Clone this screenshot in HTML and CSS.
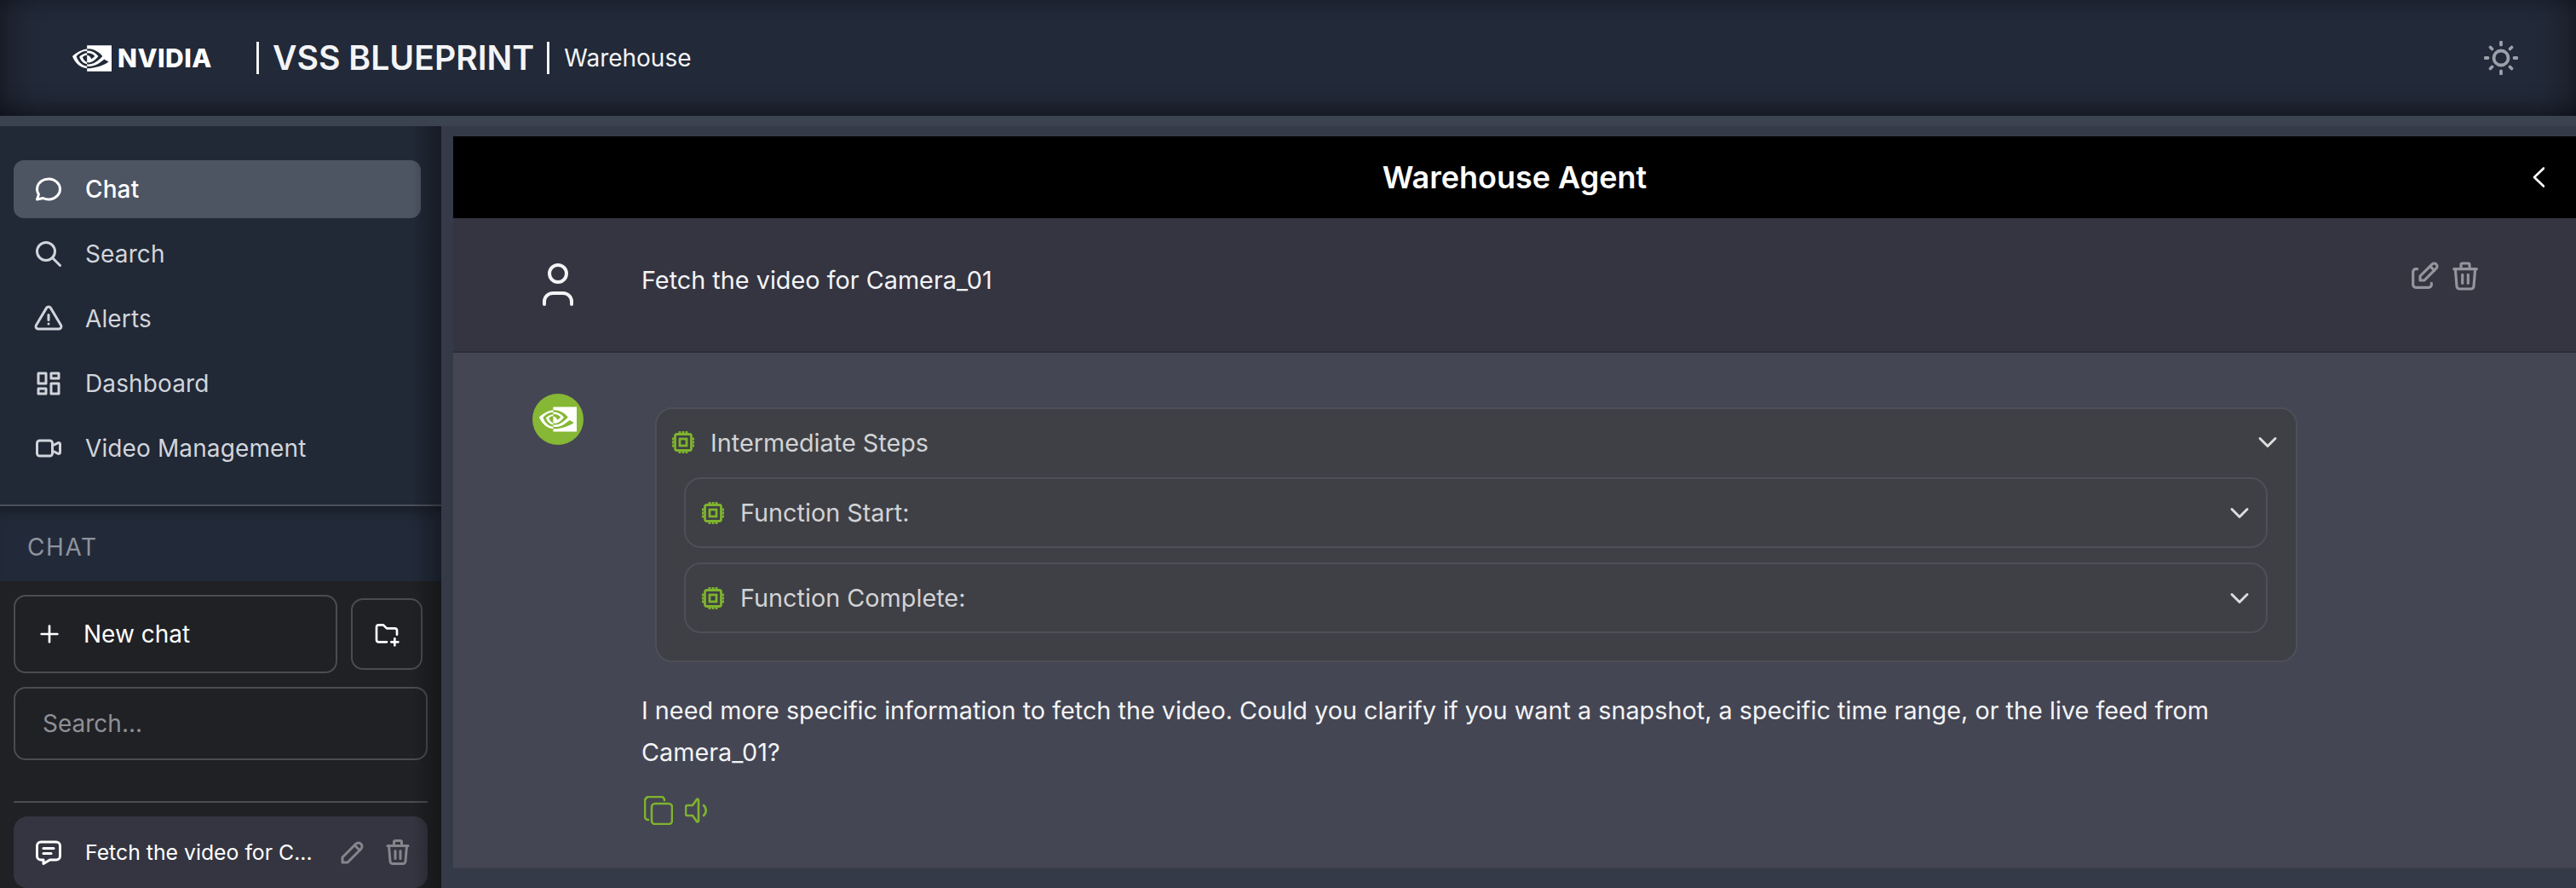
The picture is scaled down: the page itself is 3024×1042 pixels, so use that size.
FILE: index.html
```html
<!DOCTYPE html>
<html lang="en">
<head>
<meta charset="utf-8">
<title>VSS Blueprint - Warehouse</title>
<link rel="stylesheet" href="styles.css">
</head>
<body>
<svg class="sprite" aria-hidden="true">
  <symbol id="nv" viewBox="0 4 24 16"><path d="M8.948 8.798v-1.43a6.7 6.7 0 0 1 .424-.018c3.922-.124 6.493 3.374 6.493 3.374s-2.774 3.851-5.75 3.851c-.398 0-.787-.062-1.158-.185v-4.346c1.528.185 1.837.857 2.747 2.385l2.04-1.714s-1.492-1.952-4-1.952a6.016 6.016 0 0 0-.796.035m0-4.735v2.138l.424-.027c5.45-.185 9.01 4.47 9.01 4.47s-4.08 4.964-8.33 4.964c-.37 0-.733-.035-1.095-.097v1.325c.3.035.61.062.91.062 3.957 0 6.82-2.023 9.593-4.408.459.371 2.34 1.263 2.73 1.652-2.633 2.208-8.772 3.984-12.253 3.984-.335 0-.653-.018-.971-.053v1.864H24V4.063zm0 10.326v1.131c-3.657-.654-4.673-4.46-4.673-4.46s1.758-1.944 4.673-2.262v1.237H8.94c-1.528-.186-2.73 1.245-2.73 1.245s.68 2.412 2.739 3.11M2.456 10.9s2.164-3.197 6.5-3.533V6.201C4.153 6.59 0 10.653 0 10.653s2.35 6.802 8.948 7.42v-1.237c-4.84-.6-6.492-5.936-6.492-5.936z"/></symbol>
  <symbol id="chat" viewBox="0 0 24 24"><path d="M3 20l1.3 -3.9c-2.324 -3.437 -1.426 -7.872 2.1 -10.374c3.526 -2.501 8.59 -2.296 11.845 .48c3.255 2.777 3.695 7.266 1.029 10.501c-2.666 3.235 -7.615 4.215 -11.574 2.293l-4.7 1"/></symbol>
  <symbol id="search" viewBox="0 0 24 24"><circle cx="10" cy="10" r="7"/><path d="M21 21l-6 -6"/></symbol>
  <symbol id="alert" viewBox="0 0 24 24"><path d="M12 9v4"/><path d="M10.363 3.591l-8.106 13.534a1.914 1.914 0 0 0 1.636 2.871h16.214a1.914 1.914 0 0 0 1.636 -2.87l-8.106 -13.536a1.914 1.914 0 0 0 -3.274 0z"/><path d="M12 16h.01"/></symbol>
  <symbol id="dash" viewBox="0 0 24 24"><path d="M4 4h6v8h-6z"/><path d="M4 16h6v4h-6z"/><path d="M14 12h6v8h-6z"/><path d="M14 4h6v4h-6z"/></symbol>
  <symbol id="video" viewBox="0 0 24 24"><path d="M15 10l4.553 -2.276a1 1 0 0 1 1.447 .894v6.764a1 1 0 0 1 -1.447 .894l-4.553 -2.276v-4z"/><path d="M5 6h8a2 2 0 0 1 2 2v8a2 2 0 0 1 -2 2h-8a2 2 0 0 1 -2 -2v-8a2 2 0 0 1 2 -2z"/></symbol>
  <symbol id="plus" viewBox="0 0 24 24"><path d="M12 5v14"/><path d="M5 12h14"/></symbol>
  <symbol id="folder" viewBox="0 0 24 24"><path d="M12 19h-7a2 2 0 0 1 -2 -2v-11a2 2 0 0 1 2 -2h4l3 3h7a2 2 0 0 1 2 2v3.5"/><path d="M16 19h6"/><path d="M19 16v6"/></symbol>
  <symbol id="msg" viewBox="0 0 24 24"><path d="M8 9h8"/><path d="M8 13h6"/><path d="M18 4a3 3 0 0 1 3 3v8a3 3 0 0 1 -3 3h-5l-5 3v-3h-2a3 3 0 0 1 -3 -3v-8a3 3 0 0 1 3 -3h12z"/></symbol>
  <symbol id="pencil" viewBox="0 0 24 24"><path d="M4 20h4l10.5 -10.5a2.828 2.828 0 1 0 -4 -4l-10.5 10.5v4"/><path d="M13.5 6.5l4 4"/></symbol>
  <symbol id="trash" viewBox="0 0 24 24"><path d="M4 7h16"/><path d="M10 11v6"/><path d="M14 11v6"/><path d="M5 7l1 12a2 2 0 0 0 2 2h8a2 2 0 0 0 2 -2l1 -12"/><path d="M9 7v-3a1 1 0 0 1 1 -1h4a1 1 0 0 1 1 1v3"/></symbol>
  <symbol id="edit" viewBox="0 0 24 24"><path d="M7 7h-1a2 2 0 0 0 -2 2v9a2 2 0 0 0 2 2h9a2 2 0 0 0 2 -2v-1"/><path d="M20.385 6.585a2.1 2.1 0 0 0 -2.97 -2.97l-8.415 8.385v3h3l8.385 -8.415z"/><path d="M16 5l3 3"/></symbol>
  <symbol id="sun" viewBox="0 0 40 40"><circle cx="20" cy="20" r="8.5"/><path d="M20 1.5v3"/><path d="M20 35.5v3"/><path d="M1.5 20h3"/><path d="M35.5 20h3"/><path d="M7.5 7.5l2 2"/><path d="M30.5 30.5l2 2"/><path d="M7.5 32.5l2 -2"/><path d="M30.5 9.5l2 -2"/></symbol>
  <symbol id="left" viewBox="0 0 14 24"><path d="M13 1.500l-11 10.500l11 10.500"/></symbol>
  <symbol id="down" viewBox="0 0 24 24"><path d="M6 9l6 6l6 -6"/></symbol>
  <symbol id="cpu" viewBox="0 0 26 26"><rect x="3.500" y="3.500" width="19" height="19" rx="2"/><rect x="9" y="9" width="8" height="8"/><path d="M0 9h2"/><path d="M0 13h2"/><path d="M0 17h2"/><path d="M24 9h2"/><path d="M24 13h2"/><path d="M24 17h2"/><path d="M9 0v2"/><path d="M13 0v2"/><path d="M17 0v2"/><path d="M9 24v2"/><path d="M13 24v2"/><path d="M17 24v2"/></symbol>
  <symbol id="user" viewBox="0 0 36 50"><circle cx="18" cy="12" r="10"/><path d="M2 48v-3a10 10 0 0 1 10 -10h12a10 10 0 0 1 10 10v3"/></symbol>
  <symbol id="copy" viewBox="0 0 34 34"><rect x="9" y="9" width="24" height="24" rx="4"/><path d="M5 28a4 4 0 0 1 -4 -4v-18a5 5 0 0 1 5 -5h14a4 4 0 0 1 4 4"/></symbol>
  <symbol id="speaker" viewBox="0 0 28 30"><path d="M9 21h-6a2 2 0 0 1 -2 -2v-8a2 2 0 0 1 2 -2h6l5 -7a1.200 1.200 0 0 1 2 1v24a1.200 1.200 0 0 1 -2 1l-5 -7"/><path d="M22 9a8 8 0 0 1 0 12"/></symbol>
</svg>

<div class="app">
  <header class="topbar">
    <div class="brand">
      <svg class="brand-mark"><use href="#nv"/></svg>
      <span class="brand-word">NVIDIA</span>
    </div>
    <span class="rule rule-a"></span>
    <span class="product">VSS BLUEPRINT</span>
    <span class="rule rule-b"></span>
    <span class="site">Warehouse</span>
    <svg class="ico theme"><use href="#sun"/></svg>
  </header>
  <div class="strip"></div>

  <div class="body">
    <aside class="sidebar">
      <nav class="nav">
        <a class="nav-item active"><svg class="ico nav-ico"><use href="#chat"/></svg>Chat</a>
        <a class="nav-item"><svg class="ico nav-ico"><use href="#search"/></svg>Search</a>
        <a class="nav-item"><svg class="ico nav-ico"><use href="#alert"/></svg>Alerts</a>
        <a class="nav-item"><svg class="ico nav-ico"><use href="#dash"/></svg>Dashboard</a>
        <a class="nav-item"><svg class="ico nav-ico"><use href="#video"/></svg>Video Management</a>
      </nav>
      <div class="section-title">CHAT</div>
      <section class="chat-panel">
        <div class="chat-actions">
          <button class="new-chat"><svg class="ico plus"><use href="#plus"/></svg>New chat</button>
          <button class="new-folder"><svg class="ico folder"><use href="#folder"/></svg></button>
        </div>
        <div class="search-box">Search...</div>
        <hr class="panel-rule">
        <div class="history-item">
          <svg class="ico nav-ico"><use href="#msg"/></svg>
          <span class="history-text">Fetch the video for C...</span>
          <svg class="ico hist-pencil"><use href="#pencil"/></svg>
          <svg class="ico hist-trash"><use href="#trash"/></svg>
        </div>
      </section>
    </aside>

    <main class="main">
      <div class="titlebar">
        <span></span>
        <h1 class="title">Warehouse Agent</h1>
        <svg class="ico back"><use href="#left"/></svg>
      </div>

      <div class="row row-user">
        <div class="avatar-col"><svg class="ico user-ico"><use href="#user"/></svg></div>
        <div class="user-text">Fetch the video for Camera_01</div>
        <div class="user-actions">
          <svg class="ico ua-edit"><use href="#edit"/></svg>
          <svg class="ico ua-trash"><use href="#trash"/></svg>
        </div>
      </div>

      <div class="row row-bot">
        <div class="avatar-col"><div class="bot-avatar"><svg class="bot-mark"><use href="#nv"/></svg></div></div>
        <div class="bot-content">
          <div class="steps">
            <div class="step-head outer-head">
              <svg class="ico chip"><use href="#cpu"/></svg>
              <span class="step-label">Intermediate Steps</span>
              <svg class="ico chev"><use href="#down"/></svg>
            </div>
            <div class="step-card">
              <svg class="ico chip"><use href="#cpu"/></svg>
              <span class="step-label">Function Start:</span>
              <svg class="ico chev"><use href="#down"/></svg>
            </div>
            <div class="step-card">
              <svg class="ico chip"><use href="#cpu"/></svg>
              <span class="step-label">Function Complete:</span>
              <svg class="ico chev"><use href="#down"/></svg>
            </div>
          </div>
          <p class="answer">I need more specific information to fetch the video. Could you clarify if you want a snapshot, a specific time range, or the live feed from Camera_01?</p>
          <div class="bot-actions">
            <svg class="ico act-copy"><use href="#copy"/></svg>
            <svg class="ico act-speaker"><use href="#speaker"/></svg>
          </div>
        </div>
      </div>
    </main>
  </div>
</div>
</body>
</html>
```

FILE: styles.css
```css
* { box-sizing: border-box; }
html, body { margin: 0; height: 100%; }
body {
  background: #343a48;
  color: #fff;
  font-family: Inter, "Noto Sans", "Liberation Sans", sans-serif;
  overflow: hidden;
}
.sprite { display: none; }
.ico {
  fill: none;
  stroke: currentColor;
  stroke-width: 2;
  stroke-linecap: round;
  stroke-linejoin: round;
  flex: none;
  display: block;
}
.app { display: flex; flex-direction: column; height: 1042px; width: 3024px; }

/* top bar */
.topbar {
  height: 136px;
  flex: none;
  display: flex;
  align-items: center;
  padding-left: 85px;
  background: #222938;
  box-shadow: inset 0 -26px 26px -18px rgba(0,0,0,.42), inset 40px 0 40px -30px rgba(0,0,0,.35), inset -40px 0 40px -30px rgba(0,0,0,.35), inset 0 14px 20px -14px rgba(0,0,0,.25);
}
.brand { display: flex; align-items: center; width: 216px; flex: none; }
.brand-mark { width: 46px; height: 31px; fill: #fff; flex: none; }
.brand-word { margin-left: 7px; font-weight: 800; font-size: 30px; letter-spacing: .5px; line-height: 1; }
.rule { width: 3px; height: 38px; background: #f3f4f6; flex: none; }
.product { margin-left: 16px; font-size: 39.2px; font-weight: 600; color: #f3f4f6; line-height: 1; white-space: nowrap; }
.rule-b { margin-left: 15px; }
.site { margin-left: 17px; font-size: 28px; color: #f3f4f6; }
.theme { width: 40px; height: 40px; margin-left: auto; margin-right: 68px; color: #9ca0aa; stroke-width: 3.8; }
.strip { height: 12px; flex: none; background: #3c4350; }

/* layout */
.body { flex: 1; min-height: 0; display: flex; }

/* sidebar */
.sidebar {
  width: 518px;
  flex: none;
  position: relative;
  background: #212836;
  display: flex;
  flex-direction: column;
  overflow: hidden;
}
.sidebar::after {
  content: "";
  position: absolute;
  top: 0;
  bottom: 0;
  right: 0;
  width: 34px;
  background: linear-gradient(to right, rgba(0,0,0,0), rgba(0,0,0,.32));
  pointer-events: none;
}
.nav {
  height: 446px;
  flex: none;
  padding: 40px 24px 0 16px;
  display: flex;
  flex-direction: column;
  gap: 8px;
  border-bottom: 2px solid #4b505b;
}
.nav-item {
  height: 68px;
  flex: none;
  display: flex;
  align-items: center;
  gap: 25px;
  padding-left: 23px;
  font-size: 28px;
  letter-spacing: .12px;
  color: #d1d5db;
  border-radius: 12px;
}
.nav-item.active { background: #4d5462; color: #fff; font-weight: 500; }
.nav-ico { width: 36px; height: 36px; stroke-width: 2; }
.section-title {
  height: 88px;
  flex: none;
  padding: 8px 0 0 32px;
  display: flex;
  align-items: center;
  color: #8f939d;
  font-size: 28px;
  letter-spacing: 1.6px;
  background: #222a39;
  box-shadow: inset 0 18px 18px -14px rgba(0,0,0,.38);
}
.chat-panel { flex: 1; background: #202124; padding: 16px; }
.chat-actions { display: flex; align-items: center; gap: 16px; }
.new-chat {
  width: 380px;
  height: 92px;
  display: flex;
  align-items: center;
  gap: 24px;
  padding: 0 0 0 24px;
  background: transparent;
  border: 2px solid #4b4c50;
  border-radius: 14px;
  color: #fff;
  font: 28px Inter, sans-serif;
}
.plus { width: 32px; height: 32px; stroke-width: 2; }
.new-folder {
  width: 84px;
  height: 84px;
  display: flex;
  align-items: center;
  justify-content: center;
  background: transparent;
  border: 2px solid #4b4c50;
  border-radius: 14px;
  color: #fff;
  padding: 0;
}
.folder { width: 32px; height: 32px; }
.search-box {
  width: 486px;
  height: 86px;
  margin-top: 16px;
  display: flex;
  align-items: center;
  padding-left: 32px;
  border: 2px solid #4b4c50;
  border-radius: 14px;
  font-size: 28px;
  color: #8d9098;
}
.panel-rule { width: 486px; height: 2px; border: 0; margin: 48px 0 16px; background: #4b4c50; }
.history-item {
  width: 486px;
  height: 84px;
  display: flex;
  align-items: center;
  padding-left: 23px;
  background: #343540;
  border-radius: 16px;
  color: #fff;
  font-size: 24.8px;
}
.history-text { margin-left: 25px; white-space: nowrap; width: 296px; flex: none; }
.hist-pencil { width: 36px; height: 36px; color: #85868c; }
.hist-trash { width: 36px; height: 36px; margin-left: 17px; color: #85868c; }

/* main */
.main { flex: 1; min-width: 0; padding: 12px 0 0 14px; background: #343a48; display: flex; flex-direction: column; }
.titlebar {
  height: 96px;
  flex: none;
  background: #000;
  display: grid;
  grid-template-columns: 1fr auto 1fr;
  align-items: center;
}
.title { margin: 0; font-size: 36px; font-weight: 600; line-height: 1; }
.back { width: 14px; height: 24px; justify-self: end; margin-right: 37px; stroke-width: 2.6; color: #fff; }
.row { display: flex; padding-left: 93px; }
.avatar-col { width: 60px; flex: none; display: flex; justify-content: center; margin-right: 68px; }
.row-user {
  height: 158px;
  flex: none;
  align-items: center;
  padding-right: 110px;
  background: #353541;
  border-bottom: 2px solid #2c2f3b;
}
.user-ico { width: 36px; height: 50px; stroke-width: 4; color: #f3f4f6; }
.user-text { font-size: 28.8px; color: #f3f4f6; margin-bottom: 12px; }
.user-actions { margin-left: auto; display: flex; align-items: center; gap: 8px; margin-bottom: 20px; color: #94959d; }
.ua-edit { width: 40px; height: 40px; stroke-width: 1.9; }
.ua-trash { width: 40px; height: 40px; stroke-width: 1.9; }
.row-bot {
  height: 606px;
  flex: none;
  padding-top: 48px;
  background: #454653;
  border-bottom: 2px solid #3b3c49;
}
.bot-avatar {
  width: 60px;
  height: 60px;
  border-radius: 50%;
  background: #86b735;
  display: flex;
  align-items: center;
  justify-content: center;
}
.bot-mark { width: 44px; height: 30px; fill: #fff; }
.bot-content { width: 1943px; padding-top: 16px; }
.steps {
  margin-left: 16px;
  width: 1928px;
  height: 299px;
  padding: 0 33px 0 32px;
  border: 2px solid #4e4f57;
  border-radius: 20px;
  background: #3f4045;
  display: flex;
  flex-direction: column;
  gap: 17px;
}
.step-head {
  height: 78px;
  flex: none;
  display: flex;
  align-items: center;
  margin: 0 -18px -15px -14px;
}
.step-card {
  height: 83px;
  flex: none;
  display: flex;
  align-items: center;
  padding-left: 19px;
  padding-right: 13px;
  border: 2px solid #4e4f57;
  border-radius: 20px;
}
.chip { width: 26px; height: 26px; color: #7fb32e; stroke-width: 2.8; stroke-linecap: butt; stroke-linejoin: miter; }
.step-label { margin-left: 19px; font-size: 28.8px; color: #d2d3d5; }
.chev { width: 36px; height: 36px; margin-left: auto; color: #dcdcdc; stroke-width: 2; }
.answer { margin: 32px 0 0; font-size: 28.8px; line-height: 49px; color: #f3f4f6; }
.bot-actions { display: flex; align-items: center; gap: 14px; margin: 27px 0 0 3px; color: #7fb32e; }
.act-copy { width: 34px; height: 34px; stroke-width: 2.6; }
.act-speaker { width: 28px; height: 30px; stroke-width: 2.6; }
```
